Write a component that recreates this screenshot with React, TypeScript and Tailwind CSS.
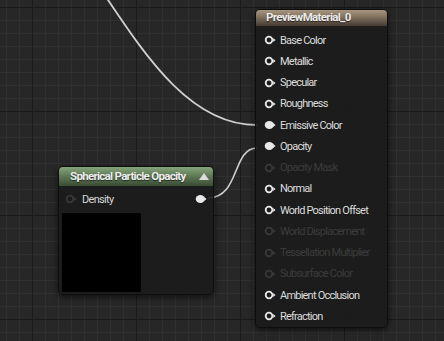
import React from "react";

const Pin = ({ filled, dim }: { filled?: boolean; dim?: boolean }) => (
  <svg
    width="12"
    height="10"
    viewBox="0 0 12 10"
    className={dim ? "text-[#383838] shrink-0" : "text-[#e8e8e8] shrink-0"}
  >
    {filled ? (
      <ellipse cx="5.3" cy="5" rx="4.6" ry="4" fill="currentColor" />
    ) : (
      <circle cx="5" cy="5" r="3.3" fill="none" stroke="currentColor" strokeWidth="1.8" />
    )}
    <path d="M9.2 3 L11.6 5 L9.2 7 Z" fill="currentColor" />
  </svg>
);

const rows: { label: string; filled?: boolean; dim?: boolean }[] = [
  { label: "Base Color" },
  { label: "Metallic" },
  { label: "Specular" },
  { label: "Roughness" },
  { label: "Emissive Color", filled: true },
  { label: "Opacity", filled: true },
  { label: "Opacity Mask", dim: true },
  { label: "Normal" },
  { label: "World Position Offset" },
  { label: "World Displacement", dim: true },
  { label: "Tessellation Multiplier", dim: true },
  { label: "Subsurface Color", dim: true },
  { label: "Ambient Occlusion" },
  { label: "Refraction" },
];

export default function App() {
  return (
    <div
      className="relative w-[444px] h-[341px] overflow-hidden bg-[#272727] bg-[image:linear-gradient(to_right,#1a1a1a_1px,transparent_1px),linear-gradient(to_bottom,#1a1a1a_1px,transparent_1px),linear-gradient(to_right,#303030_1px,transparent_1px),linear-gradient(to_bottom,#303030_1px,transparent_1px)] bg-[length:104px_104px,104px_104px,13px_13px,13px_13px] bg-[position:32px_7px]"
      style={{ fontFamily: "Roboto, 'Noto Sans', sans-serif" }}
    >
      {/* wires */}
      <svg className="absolute inset-0" width="444" height="341" viewBox="0 0 444 341">
        <path
          d="M104 -6 C 145 55 190 125 257 125"
          fill="none"
          stroke="#cfcfcf"
          strokeWidth="1.8"
        />
        <path
          d="M208 198 C 240 198 232 148 257 148"
          fill="none"
          stroke="#cfcfcf"
          strokeWidth="1.6"
        />
      </svg>

      {/* Spherical Particle Opacity node */}
      <div className="absolute left-[58px] top-[166px] w-[156px] h-[129px] rounded-[5px] bg-[#1b1c1b]/90 border border-[#0e0e0e] shadow-[0_2px_6px_rgba(0,0,0,0.6)] flex flex-col">
        <div className="h-[19px] rounded-t-[4px] bg-linear-to-b from-[#86a47a] via-[#5d7854] to-[#3a4b34] flex items-center justify-between pl-[11px] pr-[4px]">
          <span className="text-[11.5px] font-bold text-[#ececec] tracking-[-0.7px] leading-none [text-shadow:0_1px_1px_rgba(0,0,0,0.6)]">
            Spherical Particle Opacity
          </span>
          <svg width="10" height="7" viewBox="0 0 10 7">
            <path d="M5 0 L10 7 L0 7 Z" fill="#dcdcdc" />
          </svg>
        </div>
        <div className="h-[26px] flex items-center pl-[6px] pr-[6px]">
          <Pin dim />
          <span className="ml-[5px] text-[11px] text-[#d6d6d6] tracking-[-0.7px] leading-none">Density</span>
          <div className="ml-auto">
            <Pin filled />
          </div>
        </div>
        <div className="ml-[3px] mt-[1px] w-[79px] h-[79px] bg-black" />
      </div>

      {/* PreviewMaterial_0 node */}
      <div className="absolute left-[255px] top-[9px] w-[133px] h-[319px] rounded-[5px] bg-[#1b1c1b]/90 border border-[#0e0e0e] shadow-[0_2px_6px_rgba(0,0,0,0.6)] flex flex-col">
        <div className="h-[18px] rounded-t-[4px] bg-linear-to-b from-[#a89680] via-[#7b6b5a] to-[#453b33] flex items-center pl-[10px]">
          <span className="text-[11.5px] font-bold text-[#ececec] tracking-[-0.65px] leading-none [text-shadow:0_1px_1px_rgba(0,0,0,0.6)]">
            PreviewMaterial_0
          </span>
        </div>
        <div className="pt-[4px] flex flex-col">
          {rows.map((r) => (
            <div key={r.label} className="h-[21.25px] flex items-center pl-[8px]">
              <Pin filled={r.filled} dim={r.dim} />
              <span
                className={
                  "ml-[4px] text-[11px] tracking-[-0.78px] leading-none " +
                  (r.dim ? "text-[#3c3c3c]" : "text-[#dcdcdc]")
                }
              >
                {r.label}
              </span>
            </div>
          ))}
        </div>
      </div>
    </div>
  );
}
